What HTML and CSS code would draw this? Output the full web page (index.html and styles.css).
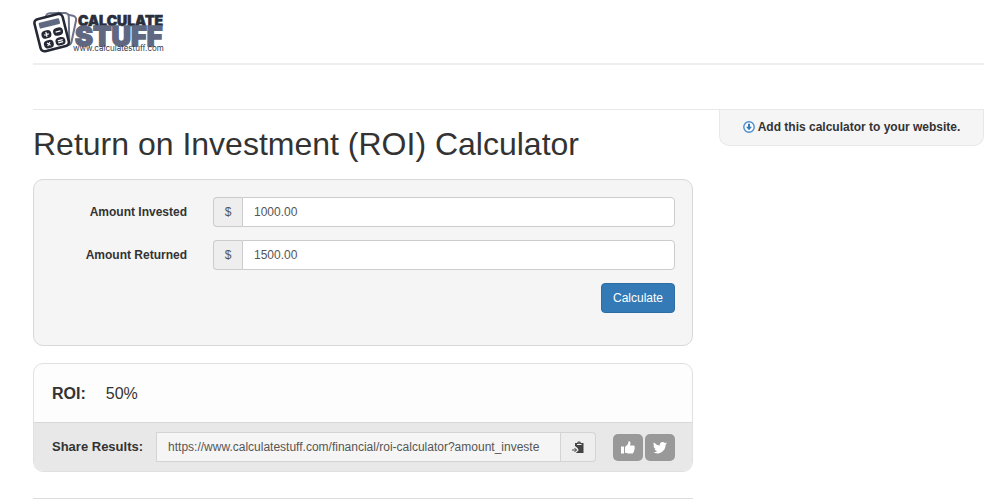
FILE: index.html
```html
<!DOCTYPE html>
<html lang="en">
<head>
<meta charset="utf-8">
<title>Return on Investment (ROI) Calculator</title>
<link rel="stylesheet" href="styles.css">
</head>
<body>
<header class="site-header">
  <a class="logo-link" href="#" aria-label="Calculate Stuff">
    <svg class="logo" width="136" height="43" viewBox="0 0 136 43">
      <g fill="#fff" stroke="#6b728a" stroke-width="2">
        <rect x="19" y="4" width="22" height="30" rx="4" transform="rotate(12 30 19)"/>
        <rect x="13" y="3" width="23" height="32" rx="4" transform="rotate(-1 25 19)"/>
      </g>
      <g transform="rotate(-14 19 22)">
        <rect x="4" y="6" width="29" height="33" rx="4" fill="#fff" stroke="#252936" stroke-width="2.600"/>
        <rect x="8" y="10" width="21" height="6" rx="1" fill="#606982"/>
        <g fill="#252936"><rect x="8" y="19" width="10" height="8" rx="4"/><rect x="20" y="19" width="10" height="8" rx="4"/><rect x="8" y="29" width="10" height="8" rx="4"/><rect x="20" y="29" width="10" height="8" rx="4"/></g>
        <path d="M10.500 23h5M13 20.500v5M22.500 23h5M11.500 31.500l3 3m0-3l-3 3M22.500 32h5M22.500 34h5" fill="none" stroke="#fff" stroke-width="1.200"/>
      </g>
      <text class="logo-top" x="45" y="16">CALCULATE</text>
      <text class="logo-main" x="42" y="36">STUFF</text>
      <text class="logo-url" x="40" y="41">www.calculatestuff.com</text>
    </svg>
  </a>
</header>
<div class="columns">
  <main>
    <h1>Return on Investment (ROI) Calculator</h1>
    <form class="panel">
      <div class="field">
        <label for="invested">Amount Invested</label>
        <div class="group"><span class="addon">$</span><input id="invested" type="text" value="1000.00"></div>
      </div>
      <div class="field">
        <label for="returned">Amount Returned</label>
        <div class="group"><span class="addon">$</span><input id="returned" type="text" value="1500.00"></div>
      </div>
      <div class="actions"><button class="primary" type="button">Calculate</button></div>
    </form>
    <section class="results">
      <div class="result"><strong>ROI:</strong><span>50%</span></div>
      <div class="share">
        <label for="share-url">Share Results:</label>
        <div class="share-group">
          <input id="share-url" type="text" readonly value="https://www.calculatestuff.com/financial/roi-calculator?amount_investe">
          <button class="copy" type="button" aria-label="Copy link">
            <svg width="12" height="13" viewBox="0 0 12 13"><path d="M3 2h2l1-1.500h2L9 2h2.500v10H4V9l2-1.500L3 5z" fill="#444"/><path d="M5 3.500h4.500M7 1.600v.8" stroke="#eee" fill="none"/><path d="M0 9h5M3 7l2 2-2 2" stroke="#eee" stroke-width="2.500" fill="none"/><path d="M0 9h4.500M2.500 7l2 2-2 2" stroke="#444" fill="none"/></svg>
          </button>
        </div>
        <div class="social">
          <button type="button" aria-label="Like"><svg width="14" height="13" viewBox="0 0 14 13"><path d="M0 5.500h3v7H0zM4 6l3-3 .5-2.500C8 0 9.500.4 9.500 2L9 4.500h3.500c1.200 0 1.500 1 1 1.800.5.600.4 1.300-.1 1.800.3.700.1 1.200-.4 1.600.2.700-.1 1.300-.6 1.600.1.800-.5 1.300-1.300 1.300H7.500L4 11.800z" fill="#fff"/></svg></button>
          <button type="button" aria-label="Tweet"><svg width="14" height="13" viewBox="0 0 24 21"><path d="M24 3.300a10 10 0 0 1-2.800.8A5 5 0 0 0 23.300 1.400a10 10 0 0 1-3.100 1.200A4.920 4.920 0 0 0 11.800 7.100 14 14 0 0 1 1.700 2a4.900 4.900 0 0 0 1.500 6.600 5 5 0 0 1-2.200-.6c0 2.300 1.600 4.400 3.900 4.900a5 5 0 0 1-2.200.1 4.900 4.900 0 0 0 4.600 3.400A9.900 9.900 0 0 1 0 18.400 14 14 0 0 0 21.500 5.900 10 10 0 0 0 24 3.300z" fill="#fff"/></svg></button>
        </div>
      </div>
    </section>
    <hr>
  </main>
  <aside>
    <a class="embed" href="#"><svg width="12" height="12" viewBox="0 0 12 12"><circle cx="6" cy="6" r="5.200" fill="#fff" stroke="#4b8ccb" stroke-width="1.400"/><path d="M5 2.800h2v3h2L6 9.200 3 5.800h2z" fill="#337ab7"/></svg><span>Add this calculator to your website.</span></a>
  </aside>
</div>
</body>
</html>
```
FILE: styles.css
```css
* { box-sizing: border-box; }
body {
  margin: 0;
  padding: 0 16px 0 33px;
  color: #333;
  background: #fff;
  font: 12px/18px "Liberation Sans", Arial, sans-serif;
}
.site-header {
  padding: 10px 0;
  border-bottom: 2px solid #eee;
}
.logo-link, .logo { display: block; }
.logo-link { width: 136px; }
.logo-top { font: 900 14px Inter, sans-serif; fill: #2a2e3b; stroke: #2a2e3b; stroke-width: 0.6px; }
.logo-main { font: 900 27px Inter, sans-serif; fill: #5f6880; stroke: #5f6880; stroke-width: 1.4px; }
.logo-url { font: 8px Inter, sans-serif; fill: #33384a; }
.columns {
  display: grid;
  grid-template-columns: minmax(0, 660fr) minmax(0, 265fr);
  gap: 26px;
  margin-top: 44px;
  border-top: 1px solid #e8e8e8;
}
h1 {
  margin: 16px 0;
  font-size: 32px;
  line-height: 37px;
  font-weight: 400;
}
.panel {
  padding: 17px 17px 32px;
  border: 1px solid #d8d8d8;
  border-radius: 10px;
  background: #f5f5f5;
}
.field {
  display: grid;
  grid-template-columns: 136px minmax(0, 1fr);
  gap: 26px;
  align-items: center;
  margin-bottom: 13px;
}
.field label { text-align: right; font-weight: 700; }
.group { display: flex; height: 30px; }
.addon {
  display: flex;
  align-items: center;
  justify-content: center;
  width: 29px;
  border: 1px solid #ccc;
  border-right: 0;
  border-radius: 4px 0 0 4px;
  background: #eee;
  color: #555;
}
input {
  flex: 1;
  min-width: 0;
  padding: 0 11px;
  border: 1px solid #ccc;
  background: #fff;
  color: #555;
  font: inherit;
}
.group input { border-radius: 0 4px 4px 0; }
.actions { display: flex; justify-content: flex-end; }
button { font: inherit; }
.primary {
  height: 30px;
  padding: 0 11px;
  border: 1px solid #2e6da4;
  border-radius: 4px;
  background: #337ab7;
  color: #fff;
}
.results {
  margin-top: 17px;
  border: 1px solid #e0e0e0;
  border-radius: 10px;
  background: #fdfdfd;
  overflow: hidden;
}
.result {
  display: flex;
  gap: 20px;
  padding: 18px 18px 17px;
  font-size: 16px;
  line-height: 23px;
}
.share {
  display: flex;
  align-items: center;
  padding: 9px 17px 9px 18px;
  border-top: 1px solid #d8d8d8;
  background: #e8e8e8;
}
.share label { margin-right: 13px; font-size: 13px; font-weight: 700; }
.share-group { display: flex; flex: 1; min-width: 0; height: 30px; }
.share-group input { border-color: #d4d4d4; background: #f5f5f5; text-overflow: clip; }
.copy {
  display: grid;
  place-items: center;
  width: 35px;
  padding: 0;
  border: 1px solid #d4d4d4;
  border-left: 0;
  border-radius: 0 4px 4px 0;
  background: #eee;
}
.social { display: flex; gap: 2px; margin-left: 17px; }
.social button {
  display: grid;
  place-items: center;
  width: 30px;
  height: 27px;
  padding: 0;
  border: 0;
  border-radius: 5px;
  background: #999;
}
hr { margin: 26px 0 0; border: 0; border-top: 1px solid #ddd; }
.embed {
  display: flex;
  align-items: center;
  justify-content: center;
  gap: 3px;
  padding: 8px 0 9px;
  border: 1px solid #e8e8e8;
  border-top: 0;
  border-radius: 0 0 10px 10px;
  background: #f5f5f5;
  color: #333;
  font-weight: 700;
  text-decoration: none;
}
```
